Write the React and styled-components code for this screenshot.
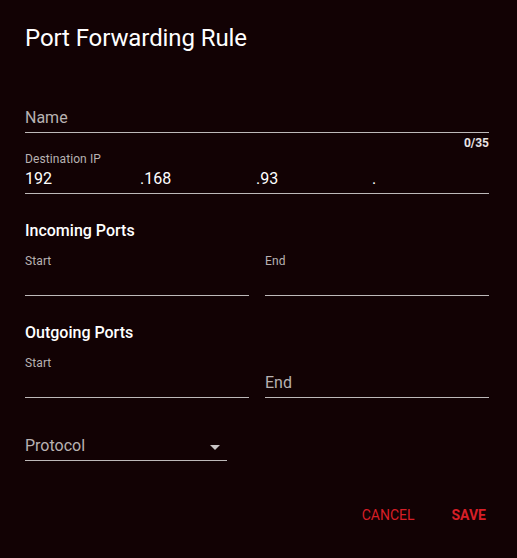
import React from 'react';
import styled, { createGlobalStyle } from 'styled-components';

const Global = createGlobalStyle`
  html, body { margin: 0; padding: 0; background: #120204; }
  body { font-family: Roboto, "Noto Sans", "Liberation Sans", sans-serif; }
  #root { width: 517px; height: 558px; }
`;

const Dialog = styled.div`
  box-sizing: border-box;
  width: 517px;
  height: 558px;
  padding: 22px 28px 0 25px;
  background: #120204;
  display: flex;
  flex-direction: column;
`;

const Title = styled.h2`
  margin: 0;
  font-size: 24px;
  line-height: 32px;
  font-weight: 400;
  color: #ffffff;
  letter-spacing: -0.1px;
`;

const Field = styled.div`
  display: flex;
  flex-direction: column;
  width: ${(p) => p.$width || '100%'};
  margin-top: ${(p) => p.$mt || 0}px;
  border-bottom: 1px solid #bdb9b9;
  position: relative;
`;

const SmallLabel = styled.div`
  height: 16px;
  font-size: 12px;
  line-height: 16px;
  color: #b8b2b2;
  letter-spacing: 0.1px;
`;

const InputArea = styled.div`
  height: 26px;
  font-size: 16px;
  line-height: 23px;
  color: ${(p) => (p.$placeholder ? '#b8b2b2' : '#ffffff')};
  display: flex;
  align-items: flex-start;
`;

const Helper = styled.div`
  margin-top: 2px;
  font-size: 12px;
  line-height: 16px;
  font-weight: 700;
  color: #e8e4e4;
  text-align: right;
`;

const Segment = styled.div`
  flex: 1;
  display: flex;
`;

const Dot = styled.span`
  margin-left: -1px;
`;

const SectionTitle = styled.h3`
  margin: 25px 0 0;
  font-size: 16px;
  line-height: 24px;
  font-weight: 500;
  color: #ffffff;
`;

const Row = styled.div`
  display: flex;
  gap: 16px;
  margin-top: 10px;
`;

const SelectArrow = styled.svg`
  position: absolute;
  right: 0;
  top: 1px;
  width: 24px;
  height: 24px;
  fill: #c9c5c5;
`;

const Actions = styled.div`
  margin-top: 36px;
  display: flex;
  justify-content: flex-end;
  gap: 37px;
  padding-right: 3px;
`;

const Button = styled.button`
  background: none;
  border: none;
  padding: 0;
  font-family: inherit;
  font-size: 14px;
  line-height: 36px;
  letter-spacing: 0;
  text-transform: uppercase;
  color: #d71f27;
  font-weight: ${(p) => (p.$primary ? 700 : 400)};
  cursor: pointer;
`;

function TextField({ label, value, shrink, width, mt }) {
  return (
    <Field $width={width} $mt={mt}>
      <SmallLabel>{shrink ? label : ''}</SmallLabel>
      <InputArea $placeholder={!shrink}>{shrink ? value : label}</InputArea>
    </Field>
  );
}

export default function App() {
  const ip = ['192', '168', '93', ''];
  return (
    <>
      <Global />
      <Dialog>
        <Title>Port Forwarding Rule</Title>

        <TextField label="Name" mt={36} />
        <Helper>0/35</Helper>

        <Field>
          <SmallLabel>Destination IP</SmallLabel>
          <InputArea>
            {ip.map((seg, i) => (
              <Segment key={i}>
                {i > 0 && <Dot>.</Dot>}
                {seg}
              </Segment>
            ))}
          </InputArea>
        </Field>

        <SectionTitle>Incoming Ports</SectionTitle>
        <Row>
          <TextField label="Start" shrink value="" />
          <TextField label="End" shrink value="" />
        </Row>

        <SectionTitle>Outgoing Ports</SectionTitle>
        <Row>
          <TextField label="Start" shrink value="" />
          <TextField label="End" />
        </Row>

        <Field $width="202px" $mt={36}>
          <InputArea $placeholder>Protocol</InputArea>
          <SelectArrow viewBox="0 0 24 24">
            <path d="M7 10l5 5 5-5z" />
          </SelectArrow>
        </Field>

        <Actions>
          <Button>Cancel</Button>
          <Button $primary>Save</Button>
        </Actions>
      </Dialog>
    </>
  );
}
